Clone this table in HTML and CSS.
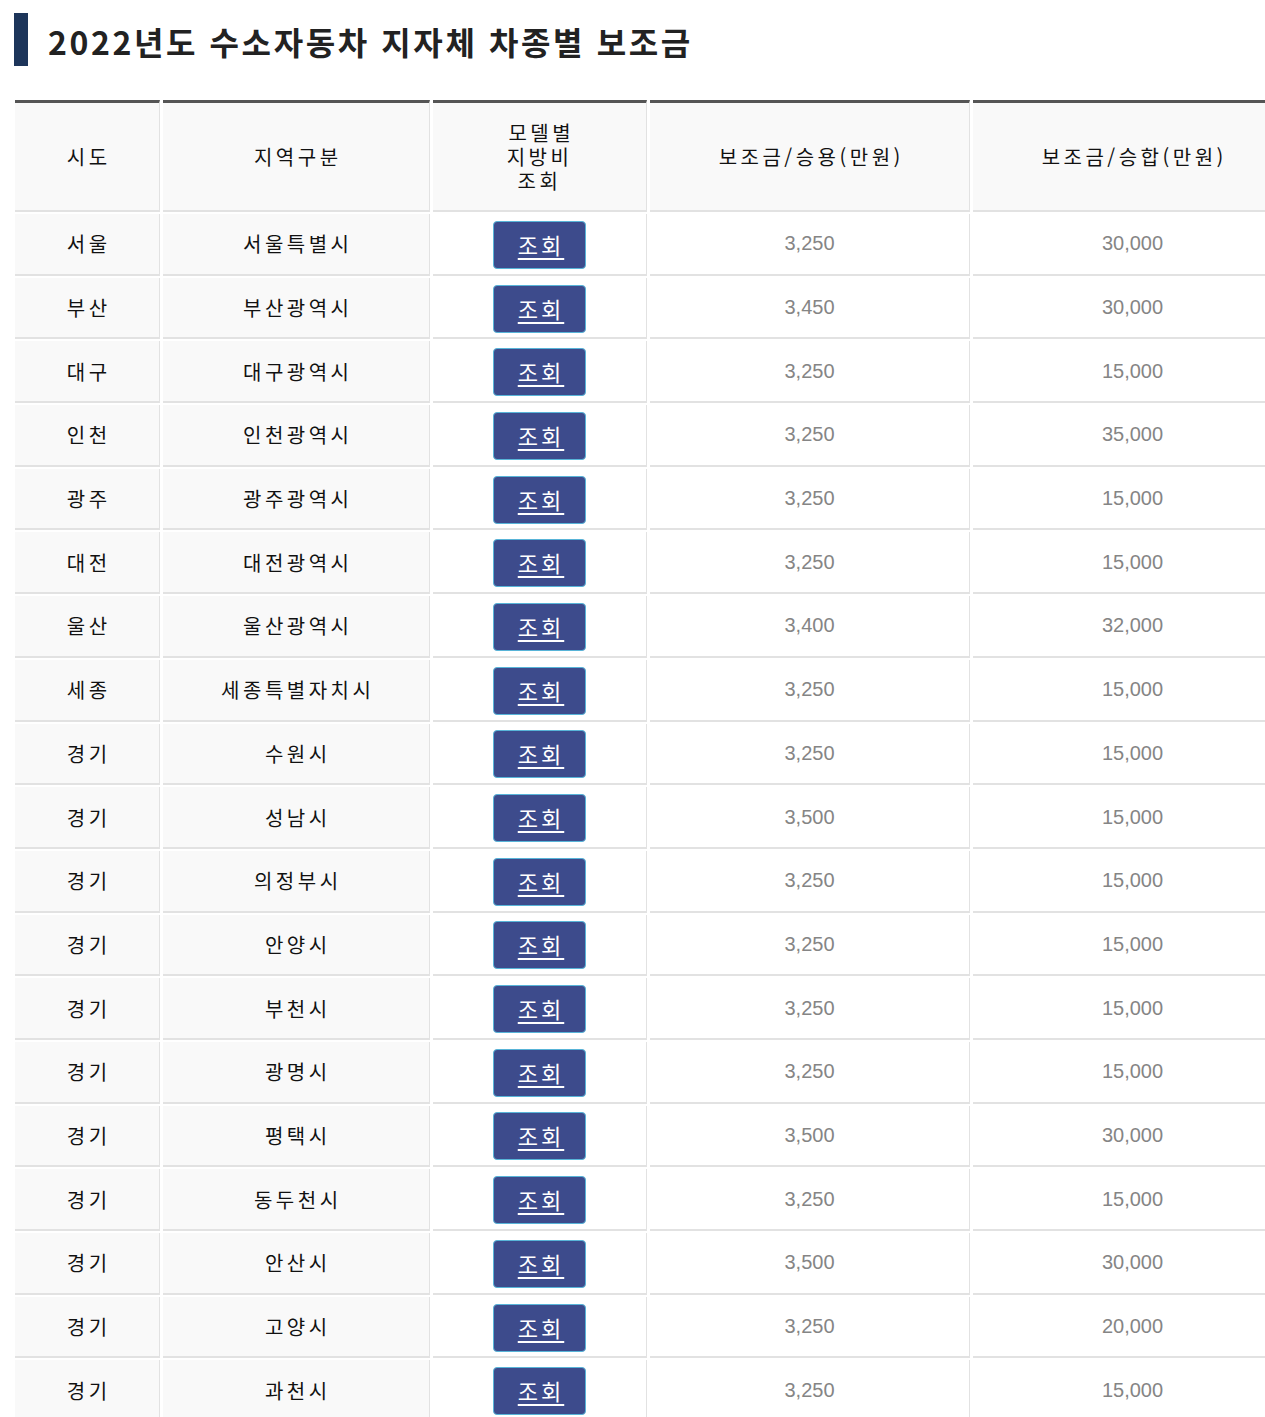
FILE: index.html
```html
<!DOCTYPE html>
<html lang="ko">
<head>
    <meta charset="UTF-8">
    <meta name="viewport" content="width=device-width, initial-scale=1.0">
    <title>2022년도 수소자동차 지자체 차종별 보조금</title>
    <link rel="stylesheet" href="styles.css">
</head>
<body>
    <div class="page">
        <h2 class="title">2022년도 수소자동차 지자체 차종별 보조금</h2>

        <table class="subsidy">
            <colgroup>
                <col class="c-sido">
                <col class="c-area">
                <col class="c-model">
                <col class="c-car">
                <col class="c-bus">
            </colgroup>
            <thead>
                <tr>
                    <th>시도</th>
                    <th>지역구분</th>
                    <th>모델별<br>지방비<br>조회</th>
                    <th>보조금/승용(만원)</th>
                    <th>보조금/승합(만원)</th>
                </tr>
            </thead>
            <tbody id="rows"></tbody>
        </table>
    </div>

    <script>
        // sido, area, car, bus
        const data = [
            ['서울', '서울특별시', '3,250', '30,000'],
            ['부산', '부산광역시', '3,450', '30,000'],
            ['대구', '대구광역시', '3,250', '15,000'],
            ['인천', '인천광역시', '3,250', '35,000'],
            ['광주', '광주광역시', '3,250', '15,000'],
            ['대전', '대전광역시', '3,250', '15,000'],
            ['울산', '울산광역시', '3,400', '32,000'],
            ['세종', '세종특별자치시', '3,250', '15,000'],
            ['경기', '수원시', '3,250', '15,000'],
            ['경기', '성남시', '3,500', '15,000'],
            ['경기', '의정부시', '3,250', '15,000'],
            ['경기', '안양시', '3,250', '15,000'],
            ['경기', '부천시', '3,250', '15,000'],
            ['경기', '광명시', '3,250', '15,000'],
            ['경기', '평택시', '3,500', '30,000'],
            ['경기', '동두천시', '3,250', '15,000'],
            ['경기', '안산시', '3,500', '30,000'],
            ['경기', '고양시', '3,250', '20,000'],
            ['경기', '과천시', '3,250', '15,000']
        ];

        const tbody = document.getElementById('rows');
        data.forEach(function(row) {
            const tr = document.createElement('tr');
            tr.innerHTML =
                '<td class="name">' + row[0] + '</td>' +
                '<td class="name">' + row[1] + '</td>' +
                '<td class="btn-cell"><a class="btn" href="#">조회</a></td>' +
                '<td class="num">' + row[2] + '</td>' +
                '<td class="num">' + row[3] + '</td>';
            tbody.appendChild(tr);
        });
    </script>
</body>
</html>
```

FILE: styles.css
```css
html, body {
    margin: 0;
    padding: 0;
    background: #fff;
    overflow-x: hidden;
}
.page {
    padding: 13px 0 0 12px;
}
.title {
    margin: 0 0 34px 2px;
    padding: 0 0 0 20px;
    border-left: 14px solid #1d355a;
    height: 53px;
    line-height: 56px;
    font-family: "Noto Sans CJK KR", "Noto Sans", sans-serif;
    font-size: 32px;
    font-weight: bold;
    color: #222;
    letter-spacing: 2.6px;
}
.subsidy {
    border-collapse: separate;
    border-spacing: 3px 2px;
    table-layout: fixed;
    width: 1284px;
    margin-top: -2px;
    font-family: "Noto Sans CJK KR", sans-serif;
    font-size: 20px;
    color: #111;
}
.c-sido { width: 145px; }
.c-area { width: 267px; }
.c-model { width: 214px; }
.c-car { width: 320px; }
.c-bus { width: 320px; }
.subsidy th {
    box-sizing: border-box;
    height: 112px;
    background: #f9f9f9;
    border-top: 3px solid #555;
    border-right: 1px solid #e2e2e2;
    border-bottom: 2px solid #e2e2e2;
    font-weight: normal;
    line-height: 24px;
    letter-spacing: 3.5px;
    text-indent: 3.5px;
    padding: 0;
}
.subsidy td {
    box-sizing: border-box;
    height: 61.7px;
    border-right: 1px solid #e2e2e2;
    border-bottom: 2px solid #e2e2e2;
    text-align: center;
    padding: 0;
    background: #fff;
}
.subsidy td.name {
    background: #f9f9f9;
    letter-spacing: 3.5px;
    text-indent: 3.5px;
}
.subsidy td.num {
    font-family: "Liberation Sans", sans-serif;
    font-size: 20px;
    color: #858585;
}
.btn {
    display: inline-block;
    box-sizing: border-box;
    width: 93px;
    height: 48px;
    line-height: 44px;
    margin-top: 2px;
    background: #3d4b8c;
    border: 1px solid #58b4d8;
    border-radius: 4px;
    color: #fff;
    font-size: 22px;
    letter-spacing: 3px;
    text-indent: 3px;
    text-decoration: underline;
    text-underline-offset: 4px;
}
```
